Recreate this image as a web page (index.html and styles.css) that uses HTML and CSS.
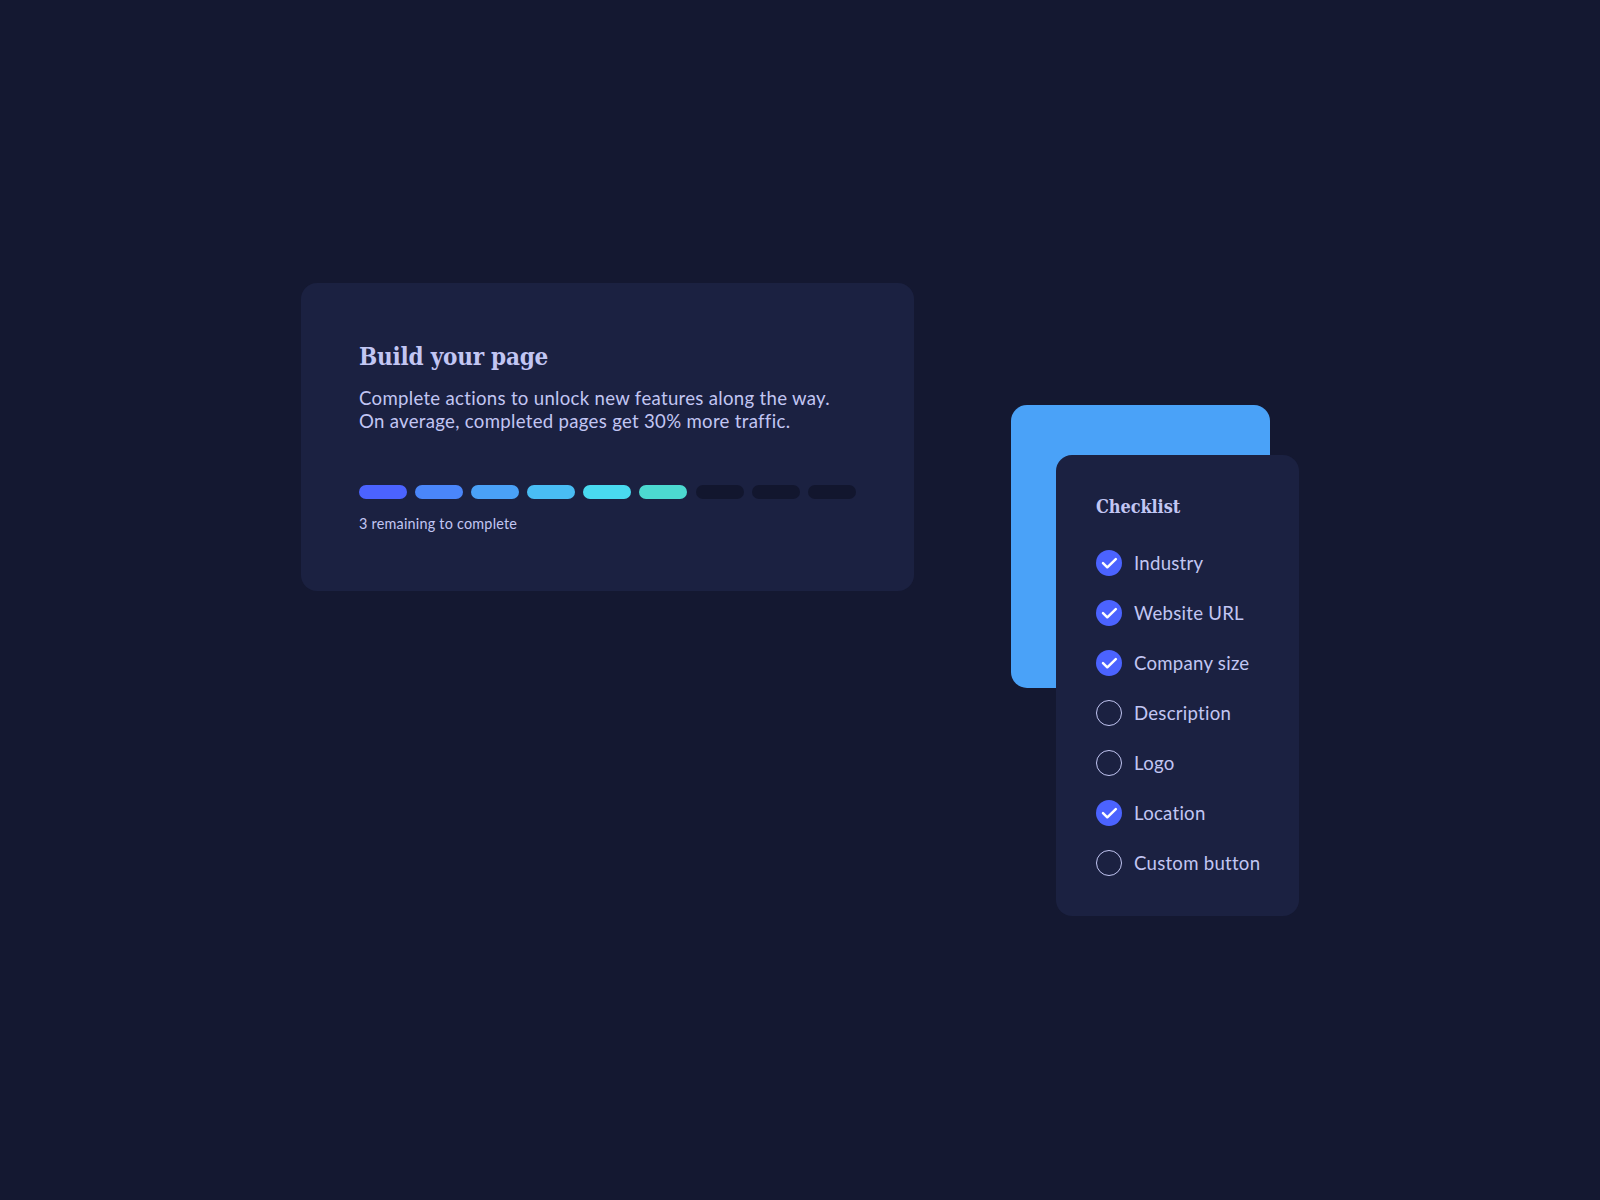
FILE: index.html
```
<!DOCTYPE html>
<html lang="en">
<head>
<meta charset="utf-8">
<title>Build your page</title>
<link rel="stylesheet" href="styles.css">
</head>
<body>
<svg class="sprite" aria-hidden="true">
  <symbol id="check" viewBox="0 0 26 26"><path d="M7 13.2l4.3 4.1 8.5-8.2"/></symbol>
</svg>
<main class="stage">
  <section class="card progress-card">
    <h1 class="title">Build your page</h1>
    <p class="lead">Complete actions to unlock new features along the way.<br>On average, completed pages get 30% more traffic.</p>
    <div class="steps">
      <span class="step step-1"></span>
      <span class="step step-2"></span>
      <span class="step step-3"></span>
      <span class="step step-4"></span>
      <span class="step step-5"></span>
      <span class="step step-6"></span>
      <span class="step"></span>
      <span class="step"></span>
      <span class="step"></span>
    </div>
    <p class="note">3 remaining to complete</p>
  </section>
  <div class="stack">
    <div class="backdrop"></div>
    <section class="card checklist">
      <h2 class="subtitle">Checklist</h2>
      <ul class="items">
        <li class="item"><span class="mark done"><svg class="tick"><use href="#check"/></svg></span><span class="label">Industry</span></li>
        <li class="item"><span class="mark done"><svg class="tick"><use href="#check"/></svg></span><span class="label">Website URL</span></li>
        <li class="item"><span class="mark done"><svg class="tick"><use href="#check"/></svg></span><span class="label">Company size</span></li>
        <li class="item"><span class="mark"></span><span class="label">Description</span></li>
        <li class="item"><span class="mark"></span><span class="label">Logo</span></li>
        <li class="item"><span class="mark done"><svg class="tick"><use href="#check"/></svg></span><span class="label">Location</span></li>
        <li class="item"><span class="mark"></span><span class="label">Custom button</span></li>
      </ul>
    </section>
  </div>
</main>
</body>
</html>
```
FILE: styles.css
```
* { box-sizing: border-box; }

body {
  margin: 0;
  min-height: 1200px;
  background: #141831;
  color: #c2c6f3;
  font-family: Lato, "Noto Sans", sans-serif;
}

h1, h2, p, ul { margin: 0; padding: 0; }

.sprite { display: none; }

.stage {
  display: flex;
  align-items: flex-start;
  gap: 97px;
  padding: 283px 0 0 301px;
}

.card {
  background: #1b2141;
  border-radius: 16px;
}

.progress-card {
  width: 613px;
  height: 308px;
  padding: 59px 57px 57px 58px;
}

.title, .subtitle {
  font-family: "DejaVu Serif Condensed", "DejaVu Serif", serif;
  font-stretch: condensed;
  font-weight: 700;
}

.title {
  font-size: 24px;
  line-height: 30px;
  letter-spacing: -0.22px;
}

.lead {
  margin-top: 15px;
  font-size: 18.6px;
  line-height: 23px;
  letter-spacing: 0.3px;
  font-variant-ligatures: none;
  white-space: nowrap;
}

.steps {
  display: flex;
  gap: 8.1px;
  margin-top: 52px;
}

.step {
  width: 48px;
  height: 14px;
  border-radius: 7px;
  background: #12162e;
}

.step-1 { background: #4b63ff; }
.step-2 { background: #4a86fa; }
.step-3 { background: #4aa1f7; }
.step-4 { background: #49bdf4; }
.step-5 { background: #49daf0; }
.step-6 { background: #4cd9d0; }

.note {
  margin-top: 16px;
  font-size: 14.4px;
  line-height: 18px;
  letter-spacing: 0.22px;
}

.stack {
  position: relative;
  margin-top: 122px;
  padding: 50px 0 0 45px;
}

.backdrop {
  position: absolute;
  top: 0;
  left: 0;
  width: 259px;
  height: 283px;
  border-radius: 16px;
  background: #4aa2f8;
}

.checklist {
  position: relative;
  width: 243px;
  padding: 41px 40px 40px;
}

.subtitle {
  font-size: 18px;
  line-height: 22px;
  letter-spacing: -0.1px;
}

.items {
  display: flex;
  flex-direction: column;
  gap: 24px;
  margin-top: 32px;
  list-style: none;
}

.item {
  display: flex;
  align-items: center;
  gap: 12px;
  height: 26px;
}

.mark {
  display: flex;
  flex: none;
  width: 26px;
  height: 26px;
  border: 1px solid #c2c6f3;
  border-radius: 50%;
}

.mark.done {
  border: 0;
  background: #4b63ff;
}

.tick {
  width: 26px;
  height: 26px;
  fill: none;
  stroke: #fff;
  stroke-width: 2.5;
  stroke-linecap: round;
  stroke-linejoin: round;
}

.label {
  font-size: 18.6px;
  line-height: 26px;
  letter-spacing: 0.26px;
  font-variant-ligatures: none;
  white-space: nowrap;
}
```
